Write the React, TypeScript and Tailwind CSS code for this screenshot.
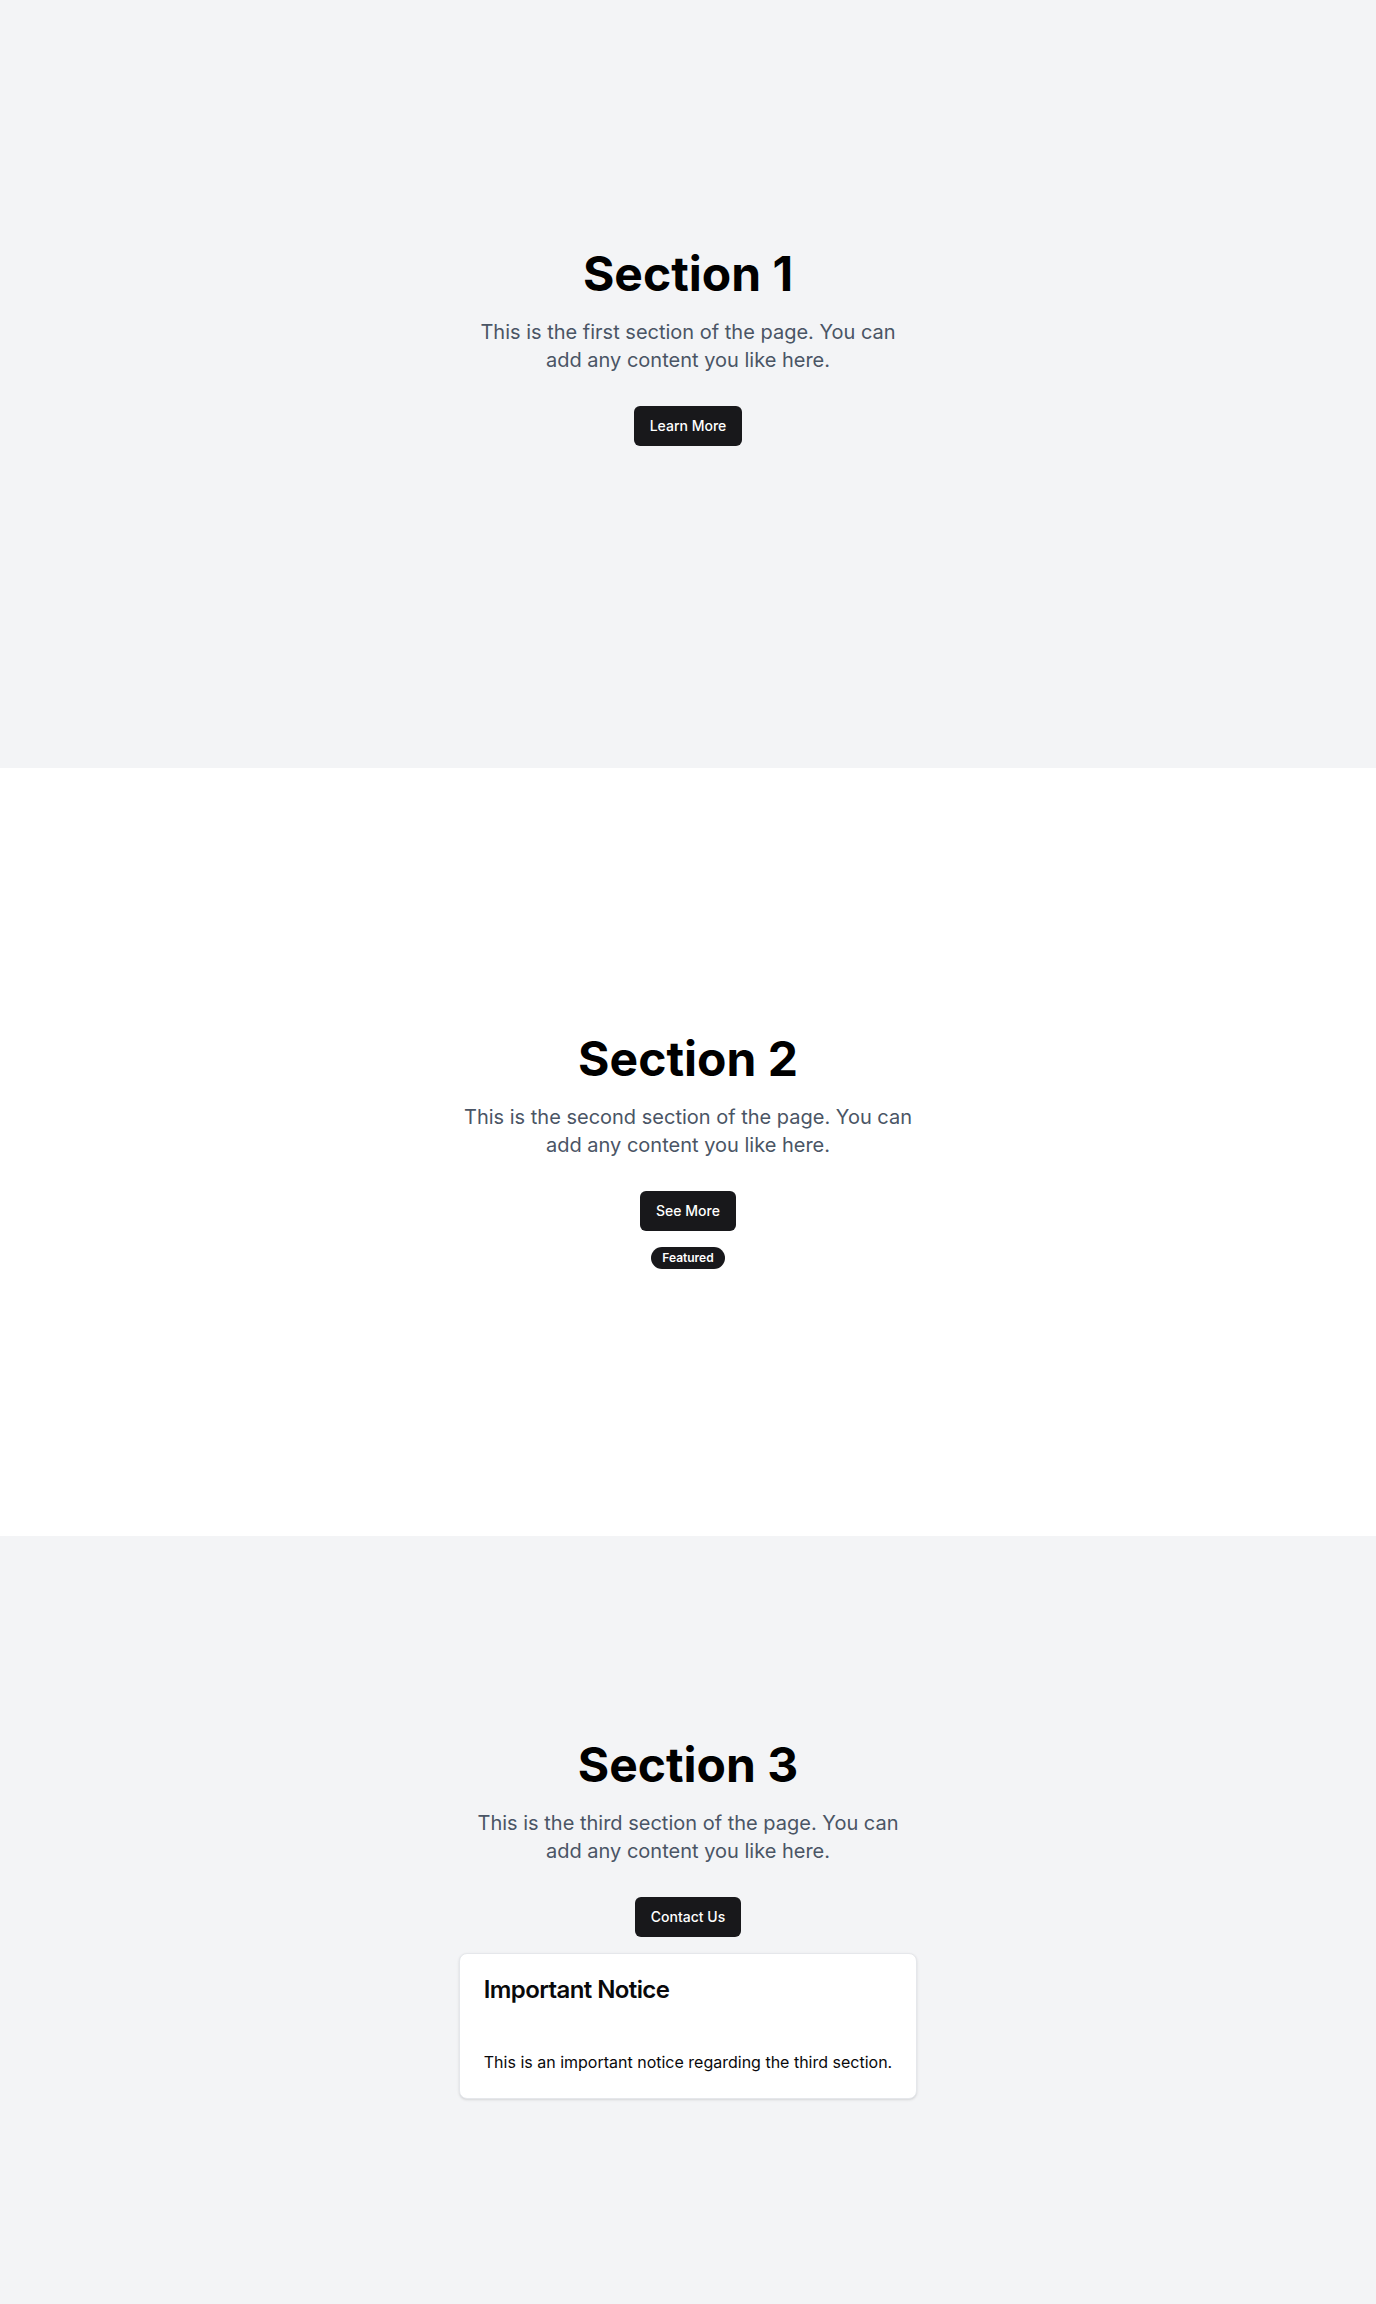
import React from 'react';

const Button: React.FC<{ children: React.ReactNode }> = ({ children }) => (
  <button className="h-10 px-4 py-2 rounded-md bg-[#18181b] text-white text-sm font-medium">
    {children}
  </button>
);

const App: React.FC = () => {
  return (
    <div className="font-['Inter','Noto_Sans',sans-serif] text-[#09090b]">
      {/* Section 1 */}
      <section className="h-[768px] bg-gray-100 flex flex-col items-center justify-center text-center px-4 pb-[72px]">
        <h1 className="text-5xl font-bold mb-5 text-black">Section 1</h1>
        <p className="text-xl text-gray-600 max-w-[456px] mb-8">
          This is the first section of the page. You can add any content you like here.
        </p>
        <Button>Learn More</Button>
      </section>

      {/* Section 2 */}
      <section className="h-[768px] bg-white flex flex-col items-center justify-center text-center px-4">
        <h1 className="text-5xl font-bold mb-5 text-black">Section 2</h1>
        <p className="text-xl text-gray-600 max-w-[456px] mb-8">
          This is the second section of the page. You can add any content you like here.
        </p>
        <Button>See More</Button>
        <span className="mt-4 inline-flex items-center rounded-full border border-transparent bg-[#18181b] px-2.5 py-0.5 text-xs font-semibold text-white">
          Featured
        </span>
      </section>

      {/* Section 3 */}
      <section className="h-[768px] bg-gray-100 flex flex-col items-center justify-center text-center px-4">
        <h1 className="text-5xl font-bold mb-5 text-black">Section 3</h1>
        <p className="text-xl text-gray-600 max-w-[456px] mb-8">
          This is the third section of the page. You can add any content you like here.
        </p>
        <Button>Contact Us</Button>
        <div className="mt-4 rounded-lg border border-gray-200 bg-white shadow-sm text-left">
          <div className="p-6">
            <h3 className="text-2xl font-semibold leading-none tracking-tight">Important Notice</h3>
          </div>
          <div className="p-6">
            <p className="text-base">This is an important notice regarding the third section.</p>
          </div>
        </div>
      </section>
    </div>
  );
};

export default App;
